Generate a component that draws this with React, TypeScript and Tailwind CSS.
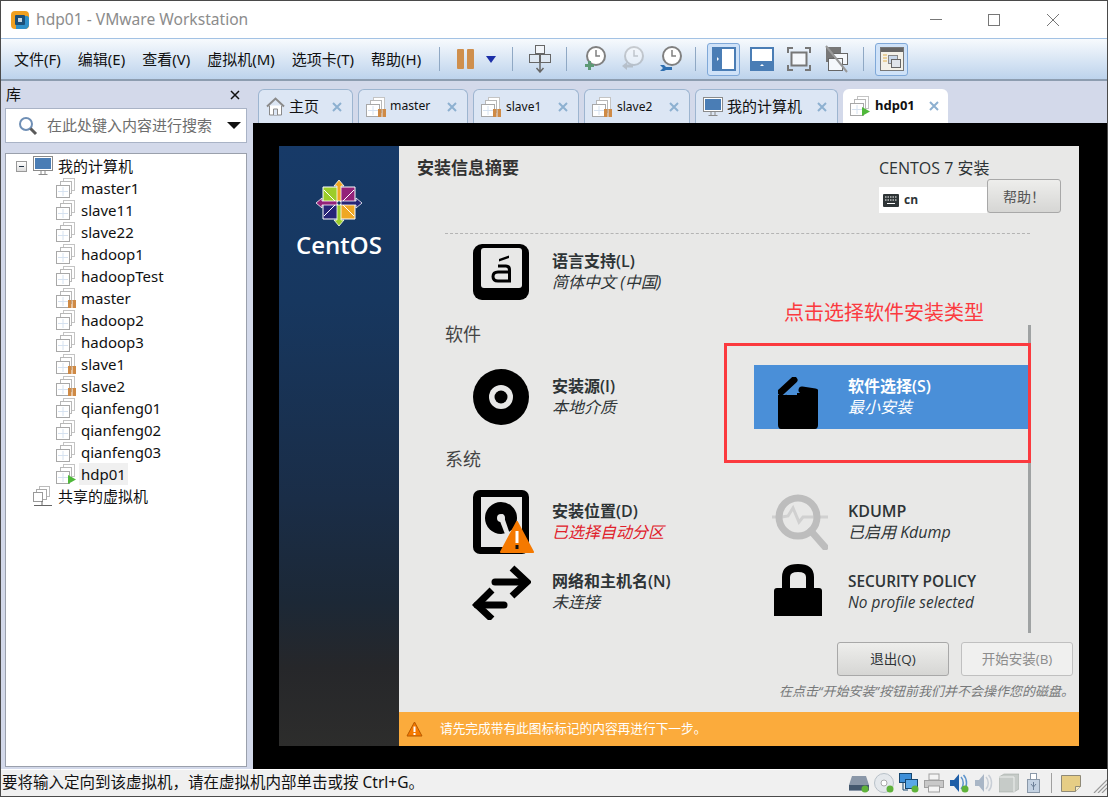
import React from "react";

// window chrome uses a Segoe-like stack, the guest installer an Overpass-like one
const uiFont = "font-['Noto_Sans','Noto_Sans_CJK_SC',sans-serif]";

// VM machine icon with optional state badge
const VmIcon = ({ state }: { state?: "pause" | "play" }) => (
  <svg width="20" height="20" viewBox="0 0 20 20" className="shrink-0">
    <rect x="7.5" y="0.5" width="11" height="12" fill="#fff" stroke="#c4c4c4" />
    <rect x="4.5" y="3.5" width="11" height="12" fill="#fff" stroke="#b8b8b8" />
    <rect x="0.5" y="7.5" width="13" height="12" fill="#fff" stroke="#a8a8a8" />
    <path d="M7 9v9M2 13.5h10" stroke="#d6e2f0" />
    {state === "pause" && (
      <path d="M12 12h3.500v8H12zM16.500 12H20v8h-3.500z" fill="#cf8a45" />
    )}
    {state === "play" && <path d="M12 11l8 4.500-8 4.500z" fill="#4fb83a" />}
  </svg>
);

const Monitor = () => (
  <svg width="20" height="20" viewBox="0 0 20 20" className="shrink-0">
    <rect x="0.500" y="0.500" width="19" height="14" fill="#fff" stroke="#8a8a8a" />
    <rect x="2" y="2" width="16" height="11" fill="#4a7db5" />
    <path d="M8 15v3M12 15v3M5.500 18.500h9" stroke="#8a8a8a" fill="none" />
  </svg>
);

const SharedIcon = () => (
  <svg width="20" height="20" viewBox="0 0 20 20" className="shrink-0">
    <rect x="6.500" y="0.500" width="10" height="10" fill="#fff" stroke="#bbb" />
    <rect x="3.500" y="3.500" width="10" height="10" fill="#fff" stroke="#aaa" />
    <rect x="0.500" y="6.500" width="9" height="9" fill="#fff" stroke="#999" />
    <path d="M9 15v4M1 19.500h18" stroke="#666" />
  </svg>
);

const HomeIcon = () => (
  <svg width="19" height="19" viewBox="0 0 19 19" className="shrink-0">
    <path d="M1 9.500L9.500 1.500 18 9.500" fill="none" stroke="#8a8a8a" strokeWidth="2" />
    <path d="M3.500 8.500v9.500h12V8.500" fill="#fff" stroke="#8a8a8a" />
    <path d="M7.500 18v-6h4v6" fill="#dce6f4" stroke="#8a8a8a" />
  </svg>
);

const Clock = ({
  color,
  children,
}: {
  color: string;
  children: React.ReactNode;
}) => (
  <svg width="24" height="26" viewBox="0 0 24 26" className="shrink-0">
    <circle cx="14" cy="10" r="9" fill="#fff" stroke={color} strokeWidth="2" />
    <path d="M14 4v6h4" fill="none" stroke={color} strokeWidth="1.500" />
    {children}
  </svg>
);

const ToolSep = () => <div className="w-px h-[24px] bg-[#8fa8c4] shrink-0" />;

const ToolToggle = ({ children }: { children: React.ReactNode }) => (
  <div className="w-[33px] h-[33px] rounded-[3px] border border-[#7fa8d8] bg-[#cfe2f8] flex items-center justify-center shrink-0">
    {children}
  </div>
);

const Toolbar = () => (
  <div className="h-[43px] flex items-center border-t border-[#a3c2e4] border-b-2 border-b-[#8d9db0] bg-gradient-to-b from-[#f7fafd] to-[#bdd3ec] pl-[13px]">
    <div className="flex gap-[17px] text-[15px] text-[#111] w-[425px] shrink-0">
      <span>文件(F)</span>
      <span>编辑(E)</span>
      <span>查看(V)</span>
      <span>虚拟机(M)</span>
      <span>选项卡(T)</span>
      <span>帮助(H)</span>
    </div>
    <ToolSep />
    <div className="flex gap-[3px] ml-[17px] shrink-0">
      <div className="w-[7px] h-[20px] bg-[#cf8f4d] rounded-[1px]" />
      <div className="w-[7px] h-[20px] bg-[#cf8f4d] rounded-[1px]" />
    </div>
    <svg width="10" height="7" viewBox="0 0 10 7" className="ml-[12px] shrink-0">
      <path d="M0 0h10L5 7z" fill="#1c2fa8" />
    </svg>
    <div className="ml-[16px]">
      <ToolSep />
    </div>
    <svg width="22" height="28" viewBox="0 0 22 28" className="ml-[16px] shrink-0">
      <rect x="6.500" y="0.500" width="9" height="8" fill="#f2f5f9" stroke="#666" />
      <rect x="0.500" y="9.500" width="10" height="8" fill="#dfe8f2" stroke="#666" />
      <rect x="11.500" y="9.500" width="10" height="8" fill="#dfe8f2" stroke="#666" />
      <path d="M11 18v8M7.500 23l3.500 4 3.500-4" fill="none" stroke="#666" strokeWidth="1.500" />
    </svg>
    <div className="ml-[15px]">
      <ToolSep />
    </div>
    <div className="ml-[15px]">
      <Clock color="#808080">
        <path d="M3 18h3v-3h3v3h3v3H9v3H6v-3H3z" fill="#5d9a76" />
      </Clock>
    </div>
    <div className="ml-[14px] opacity-40">
      <Clock color="#909090">
        <path d="M2 20l5-4v2.500h6v3H7V24z" fill="#909090" />
      </Clock>
    </div>
    <div className="ml-[14px]">
      <Clock color="#808080">
        <path d="M2 19h4l2 2h6v3H8l-2 1H2l3-3z" fill="#2f6fb0" />
      </Clock>
    </div>
    <div className="ml-[13px]">
      <ToolSep />
    </div>
    <div className="ml-[11px]">
      <ToolToggle>
        <svg width="24" height="24" viewBox="0 0 24 24">
          <rect width="24" height="24" fill="#4a7db5" />
          <rect x="10" y="2" width="12" height="20" fill="#fff" />
          <path d="M5 10l2 2-2 2z" fill="#fff" />
        </svg>
      </ToolToggle>
    </div>
    <svg width="24" height="24" viewBox="0 0 24 24" className="ml-[10px] shrink-0">
      <rect width="24" height="24" fill="#4a7db5" />
      <rect x="2" y="2" width="20" height="12" fill="#fff" />
      <path d="M10 19l2-2 2 2z" fill="#fff" />
    </svg>
    <svg width="24" height="24" viewBox="0 0 24 24" className="ml-[13px] shrink-0">
      <path d="M1 6V1h5M18 1h5v5M23 18v5h-5M6 23H1v-5" fill="none" stroke="#777" strokeWidth="2" />
      <rect x="4.500" y="5.500" width="15" height="13" fill="#f4f7fb" stroke="#777" strokeWidth="2" />
    </svg>
    <svg width="24" height="28" viewBox="0 0 24 28" className="ml-[14px] shrink-0">
      <rect x="1" y="2" width="15" height="15" fill="#777" />
      <rect x="8.500" y="8.500" width="14" height="11" fill="#f4f7fb" stroke="#666" />
      <rect x="3.500" y="13.500" width="14" height="12" fill="#f4f7fb" stroke="#666" />
      <path d="M1 1l21 26" stroke="#999" strokeWidth="2" />
    </svg>
    <div className="ml-[14px]">
      <ToolSep />
    </div>
    <div className="ml-[11px]">
      <ToolToggle>
        <svg width="24" height="24" viewBox="0 0 24 24">
          <rect x="0.500" y="0.500" width="23" height="23" fill="#f3f1e9" stroke="#777" />
          <rect x="1" y="1" width="22" height="4" fill="#666" />
          <path d="M3 8h4M3 11h4M3 14h4" stroke="#e0b050" />
          <rect x="8.500" y="8.500" width="9" height="8" fill="#c9d8ea" stroke="#888" />
          <rect x="11.500" y="12.500" width="9" height="8" fill="#dfe4ea" stroke="#666" />
        </svg>
      </ToolToggle>
    </div>
  </div>
);

const tabs = [
  { name: "主页", w: "w-[95px]", icon: <HomeIcon />, cls: "text-[15px] ml-[4px]" },
  { name: "master", w: "w-[110px]", icon: <VmIcon state="pause" />, cls: "text-[12.200px] ml-[4px]" },
  { name: "slave1", w: "w-[106px]", icon: <VmIcon state="pause" />, cls: "text-[12px] ml-[5px]" },
  { name: "slave2", w: "w-[106px]", icon: <VmIcon state="pause" />, cls: "text-[12px] ml-[5px]" },
  { name: "我的计算机", w: "w-[143px]", icon: <Monitor />, cls: "text-[15px] ml-[4px]" },
];

const CloseX = ({ color = "#8db0d0" }: { color?: string }) => (
  <svg width="10" height="10" viewBox="0 0 10 10" className="shrink-0">
    <path d="M1 1l8 8M9 1l-8 8" stroke={color} strokeWidth="2" />
  </svg>
);

const TabBar = () => (
  <div className="h-[42px] pt-[8px] pl-[5px] flex gap-[5px] bg-[#d3d9ea] shrink-0">
    {tabs.map((t) => (
      <div
        key={t.name}
        className={`${t.w} h-[34px] pl-[7px] pr-[10px] flex items-center bg-[#dce6f4] border border-b-0 border-[#9db5d0] rounded-t-[6px] text-[#111]`}
      >
        {t.icon}
        <span className={t.cls}>{t.name}</span>
        <span className="ml-auto">
          <CloseX />
        </span>
      </div>
    ))}
    <div className="w-[105px] h-[34px] pl-[7px] pr-[9px] flex items-center bg-white rounded-t-[6px] text-[#111]">
      <VmIcon state="play" />
      <span className="text-[13px] font-bold ml-[5px]">hdp01</span>
      <span className="ml-auto">
        <CloseX />
      </span>
    </div>
  </div>
);

const vms: { name: string; state?: "pause" | "play" }[] = [
  { name: "master1" },
  { name: "slave11" },
  { name: "slave22" },
  { name: "hadoop1" },
  { name: "hadoopTest" },
  { name: "master", state: "pause" },
  { name: "hadoop2" },
  { name: "hadoop3" },
  { name: "slave1", state: "pause" },
  { name: "slave2", state: "pause" },
  { name: "qianfeng01" },
  { name: "qianfeng02" },
  { name: "qianfeng03" },
  { name: "hdp01", state: "play" },
];

const Library = () => (
  <div className="w-[252px] shrink-0 bg-[#d3d9ea] pl-[4px] flex flex-col">
    <div className="h-[27px] w-[242px] flex items-center justify-between pl-[1px] pr-[7px] text-[15px] text-[#111]">
      <span>库</span>
      <svg width="10" height="10" viewBox="0 0 10 10">
        <path d="M1 1l8 8M9 1l-8 8" stroke="#111" strokeWidth="1.500" />
      </svg>
    </div>
    <div className="h-[35px] w-[242px] bg-white border border-[#a9b3c6] flex items-center pl-[12px] pr-[4px]">
      <svg width="20" height="20" viewBox="0 0 20 20" className="shrink-0">
        <circle cx="8" cy="8" r="6" fill="#fff" stroke="#6f8fb5" strokeWidth="2" />
        <path d="M12.500 12.500L18 18" stroke="#5a5a5a" strokeWidth="3" />
      </svg>
      <span className="ml-[9px] text-[15px] text-[#6d6d6d]">在此处键入内容进行搜索</span>
      <svg width="14" height="7" viewBox="0 0 14 7" className="ml-auto mr-[1px]">
        <path d="M0 0h14L7 7z" fill="#111" />
      </svg>
    </div>
    <div className="mt-[10px] h-[614px] w-[242px] bg-white border border-[#9aa0ac] pt-[1px] text-[15px] text-[#111]">
      <div className="h-[22px] flex items-center pl-[10px]">
        <div className="w-[11px] h-[11px] border border-[#999] bg-gradient-to-b from-white to-[#ddd] flex items-center justify-center">
          <div className="w-[5px] h-px bg-[#234]" />
        </div>
        <div className="ml-[6px]">
          <Monitor />
        </div>
        <span className="ml-[5px]">我的计算机</span>
      </div>
      {vms.map((vm) => (
        <div key={vm.name} className="h-[22px] flex items-center pl-[50px]">
          <VmIcon state={vm.state} />
          <span
            className={`ml-[3px] px-[2px] leading-[22px] ${
              vm.name === "hdp01" ? "bg-[#f0f0f0]" : ""
            }`}
          >
            {vm.name}
          </span>
        </div>
      ))}
      <div className="h-[22px] flex items-center pl-[27px]">
        <SharedIcon />
        <span className="ml-[5px]">共享的虚拟机</span>
      </div>
    </div>
  </div>
);

// CentOS pinwheel
const CentosLogo = () => (
  <svg width="46" height="46" viewBox="0 0 46 46">
    <path d="M7 7h14.500v14.500H7z" fill="#9ccd2a" stroke="#fff" />
    <path d="M24.500 7H39v14.500H24.500z" fill="#932279" stroke="#fff" />
    <path d="M7 24.500h14.500V39H7z" fill="#262577" stroke="#fff" />
    <path d="M24.500 24.500H39V39H24.500z" fill="#efa724" stroke="#fff" />
    <path d="M23 0l5 6h-3v15h-4V6h-3z" fill="#efa724" stroke="#fff" strokeWidth="0.800" />
    <path d="M46 23l-6 5v-3H25v-4h15v-3z" fill="#262577" stroke="#fff" strokeWidth="0.800" />
    <path d="M23 46l-5-6h3V25h4v15h3z" fill="#9ccd2a" stroke="#fff" strokeWidth="0.800" />
    <path d="M0 23l6-5v3h15v4H6v3z" fill="#932279" stroke="#fff" strokeWidth="0.800" />
    <path d="M8 10l11 11M38 10L27 21M8 36l11-11M38 36L27 25" stroke="#fff" strokeWidth="1" />
  </svg>
);

const LangIcon = () => (
  <svg width="56" height="56" viewBox="0 0 56 56">
    <rect width="56" height="56" rx="9" fill="#000" />
    <rect x="8" y="4" width="41" height="40" rx="3" fill="#e8e8e7" />
    <path d="M26 15l10-3.500v2.500l-10 3.500z" fill="#000" />
    <path
      d="M25 22h8c2.500 0 3.500 1.500 3.500 4v11H25c-3 0-5-1.500-5-4.500s2-4.500 5-4.500h11"
      fill="none"
      stroke="#000"
      strokeWidth="3"
    />
  </svg>
);

const DiscIcon = () => (
  <svg width="56" height="56" viewBox="0 0 56 56">
    <circle cx="28" cy="28" r="28" fill="#000" />
    <circle cx="28" cy="28" r="12" fill="#e8e8e7" />
    <circle cx="28" cy="28" r="6.500" fill="#000" />
  </svg>
);

const DiskIcon = () => (
  <svg width="60" height="64" viewBox="0 0 60 64" className="overflow-visible">
    <rect width="56" height="64" rx="7" fill="#000" />
    <rect x="8" y="7" width="41" height="50" fill="#e8e8e7" />
    <circle cx="28" cy="28" r="16" fill="#000" />
    <path d="M25 26l5-2 9 26-4 2z" fill="#e8e8e7" />
    <circle cx="28" cy="28" r="4" fill="#e8e8e7" />
    <path d="M44 32l16 30H28z" fill="#f57900" stroke="#f57900" strokeWidth="2" strokeLinejoin="round" />
    <path d="M44 41v12" stroke="#fff" strokeWidth="3" />
    <path d="M42.500 55h3v4h-3z" fill="#111" />
  </svg>
);

const NetIcon = () => (
  <svg width="60" height="56" viewBox="0 0 60 56" fill="none" stroke="#000" strokeWidth="7" strokeLinecap="round">
    <path d="M24 18h29" />
    <path d="M41 4l15 14-15 14" strokeLinecap="butt" />
    <path d="M33 41H6" />
    <path d="M21 26L6 41l15 14" strokeLinecap="butt" />
  </svg>
);

const PackageIcon = () => (
  <svg width="40" height="52" viewBox="0 0 40 52" className="mt-[12px]">
    <path d="M0 18h7l9-2h24v32c0 2-1 4-3 4H3c-2 0-3-2-3-4z" fill="#000" />
    <path d="M3 15L16 3" stroke="#000" strokeWidth="7" strokeLinecap="round" />
    <path d="M24 13l13 2" stroke="#000" strokeWidth="7" strokeLinecap="round" />
    <path d="M8 18l11-11v11z" fill="#4a8fd8" />
  </svg>
);

const KdumpIcon = () => (
  <svg width="56" height="56" viewBox="0 0 56 56" fill="none" stroke="#bdbdbd">
    <path d="M0 23h10l6-1 5-8 6 14 4-5h25" strokeWidth="3" stroke="#d0d0d0" />
    <circle cx="26" cy="23" r="19" strokeWidth="7" />
    <path d="M39 37l14 16" strokeWidth="7" strokeLinecap="round" />
  </svg>
);

const LockIcon = () => (
  <svg width="48" height="52" viewBox="0 0 48 52" className="mb-[4px]">
    <path d="M12 26V13c0-6 4-9 12-9s12 3 12 9v13" fill="none" stroke="#000" strokeWidth="8" />
    <path d="M3 24h42c2 0 3 1 3 3v25H0V27c0-2 1-3 3-3z" fill="#000" />
  </svg>
);

const Spoke = ({
  icon,
  title,
  sub,
  tone = "text-[#2e3436]",
  subTone = "text-[#2e3436]",
  textLeft,
  size = "text-[16px]",
}: {
  icon: React.ReactNode;
  title: string;
  sub: string;
  tone?: string;
  subTone?: string;
  textLeft: string;
  size?: string;
}) => (
  <div className={`h-full flex items-center ${tone}`}>
    <div className={`${textLeft} flex items-center shrink-0`}>{icon}</div>
    <div className={`leading-[21px] whitespace-nowrap ${size}`}>
      <div className="font-semibold">{title}</div>
      <div className={`italic ${subTone}`}>{sub}</div>
    </div>
  </div>
);

const Installer = () => (
  <div className="w-[800px] h-[600px] flex text-[#2e3436] font-['Open_Sans','Noto_Sans_CJK_SC',sans-serif]">
    <div className="w-[120px] shrink-0 bg-[linear-gradient(to_bottom,#173a68_0%,#17375f_26%,#1a2d47_59%,#1c2836_76%,#26272a_87%,#2d2d2c_100%)] flex flex-col items-center pt-[34px]">
      <CentosLogo />
      <div className="mt-[4px] text-[24px] leading-[30px] font-semibold text-white">CentOS</div>
    </div>
    <div className="relative flex-1 bg-[#e8e8e7] flex flex-col">
      <div className="h-[87px] flex justify-between pl-[18px] pr-[18px] pt-[11px] shrink-0">
        <div className="text-[17px] font-semibold leading-[21px] text-[#333]">安装信息摘要</div>
        <div className="w-[182px]">
          <div className="text-[16px] leading-[22px] whitespace-nowrap">CENTOS 7 安装</div>
          <div className="h-[34px] flex items-end">
            <div className="w-[108px] h-[26px] bg-white flex items-center pl-[4px] gap-[5px] text-[12px] font-bold">
              <svg width="16" height="13" viewBox="0 0 16 13">
                <rect width="16" height="13" rx="1" fill="#2e3436" />
                <path d="M2 3h12M2 6h12" stroke="#fff" strokeDasharray="1.500 1" />
                <path d="M4 9.500h8" stroke="#fff" />
              </svg>
              cn
            </div>
            <div className="w-[74px] h-[34px] border border-[#a8a8a8] rounded-[3px] bg-gradient-to-b from-[#eeeeec] to-[#d6d6d4] flex items-center justify-center text-[14px] text-[#555]">
              帮助！
            </div>
          </div>
        </div>
      </div>
      <div className="ml-[46px] w-[585px] border-t border-dashed border-[#b4b4b4] shrink-0" />
      <div className="mt-[6px] grid grid-cols-[355px_277px] grid-rows-[64px_61px_64px_61px_64px]">
        <div className="pl-[74px]">
          <Spoke textLeft="w-[79px]" icon={<LangIcon />} title="语言支持(L)" sub="简体中文 (中国)" />
        </div>
        <div />
        <div className="col-span-2 flex items-center pl-[46px] text-[18px] text-[#444]">软件</div>
        <div className="pl-[74px]">
          <Spoke textLeft="w-[79px]" icon={<DiscIcon />} title="安装源(I)" sub="本地介质" />
        </div>
        <div className="bg-[#4a8fd8] pl-[24px]">
          <Spoke
            textLeft="w-[70px]"
            tone="text-white"
            subTone="text-white"
            icon={<PackageIcon />}
            title="软件选择(S)"
            sub="最小安装"
          />
        </div>
        <div className="col-span-2 flex items-center pl-[46px] text-[18px] text-[#444]">系统</div>
        <div className="pl-[74px]">
          <Spoke
            textLeft="w-[79px]"
            icon={<DiskIcon />}
            title="安装位置(D)"
            sub="已选择自动分区"
            subTone="text-[#e0202a]"
          />
        </div>
        <div className="pl-[18px]">
          <Spoke textLeft="w-[76px]" icon={<KdumpIcon />} title="KDUMP" sub="已启用 Kdump" />
        </div>
      </div>
      <div className="mt-[6px] grid grid-cols-[355px_277px] h-[64px]">
        <div className="pl-[72px]">
          <Spoke textLeft="w-[81px]" icon={<NetIcon />} title="网络和主机名(N)" sub="未连接" />
        </div>
        <div className="pl-[20px]">
          <Spoke
            textLeft="w-[74px]"
            size="text-[15.400px]"
            icon={<LockIcon />}
            title="SECURITY POLICY"
            sub="No profile selected"
          />
        </div>
      </div>
      <div className="mt-[18px] flex justify-end gap-[12px] pr-[6px] text-[13.500px]">
        <div className="w-[112px] h-[34px] border border-[#a8a8a8] rounded-[3px] bg-gradient-to-b from-[#eeeeec] to-[#d6d6d4] flex items-center justify-center text-[#2e3436]">
          退出(Q)
        </div>
        <div className="w-[112px] h-[34px] border border-[#c0c0c0] rounded-[3px] bg-[#f0f0ef] flex items-center justify-center text-[#8c8c8c]">
          开始安装(B)
        </div>
      </div>
      <div className="mt-[6px] pr-[5px] text-right text-[13px] leading-[18px] italic text-[#77797a]">
        在点击“开始安装”按钮前我们并不会操作您的磁盘。
      </div>
      <div className="mt-auto h-[34px] bg-[#fbab3c] flex items-center pl-[7px] text-[12.700px] text-white">
        <svg width="17" height="16" viewBox="0 0 17 16">
          <path d="M8.500 1L16 15H1z" fill="#f57900" stroke="#b85a00" strokeLinejoin="round" />
          <path d="M8.500 5.500v5.500" stroke="#fff" strokeWidth="2" />
          <path d="M7.500 12h2v2h-2z" fill="#fff" />
        </svg>
        <span className="ml-[17px]">请先完成带有此图标标记的内容再进行下一步。</span>
      </div>

      {/* scrollbar and the red annotation sit on top of the spokes */}
      <div className="absolute left-[629px] top-[179px] w-[3px] h-[308px] bg-[#9fa2a3]" />
      <div className="absolute left-[325px] top-[197px] w-[307px] h-[120px] border-[3px] border-[#fb3a3f]" />
      <div className="absolute left-[385px] top-[153px] text-[20px] leading-[26px] text-[#fb3a3f] font-['Noto_Sans_CJK_SC',sans-serif]">
        点击选择软件安装类型
      </div>
    </div>
  </div>
);

const StatusIcons = () => (
  <div className="ml-auto flex items-center shrink-0">
    <svg width="20" height="20" viewBox="0 0 20 20">
      <path d="M3 3h14l3 9v6H0v-6z" fill="#8a97a8" />
      <rect y="12" width="20" height="5" fill="#44586e" />
      <circle cx="16" cy="16" r="3.500" fill="#5fb23a" />
    </svg>
    <svg width="20" height="20" viewBox="0 0 20 20" className="ml-[5px]">
      <circle cx="10" cy="10" r="9.500" fill="#e4e8ec" stroke="#b8c0c8" />
      <circle cx="10" cy="10" r="3" fill="#fff" stroke="#aaa" />
      <circle cx="16" cy="16" r="3.500" fill="#5fb23a" />
    </svg>
    <svg width="20" height="20" viewBox="0 0 20 20" className="ml-[5px]">
      <rect x="0.500" y="0.500" width="12" height="9" fill="#3f8fd8" stroke="#16466f" />
      <rect x="6.500" y="6.500" width="12" height="9" fill="#5aa8e8" stroke="#16466f" />
      <path d="M4 10v7h5" stroke="#16466f" fill="none" />
      <circle cx="16" cy="16" r="3.500" fill="#5fb23a" />
    </svg>
    <svg width="20" height="20" viewBox="0 0 20 20" className="ml-[5px]">
      <rect x="5" y="1" width="10" height="6" fill="#f4f4f4" stroke="#a0a0a0" />
      <rect x="0.500" y="7.500" width="19" height="7" fill="#c8c8c8" stroke="#a0a0a0" />
      <rect x="4.500" y="13" width="11" height="6" fill="#f4f4f4" stroke="#a0a0a0" />
    </svg>
    <svg width="20" height="20" viewBox="0 0 20 20" className="ml-[5px]">
      <path d="M1 7h4l5-6v18l-5-6H1z" fill="#1f5fa8" />
      <path d="M12 4c3 3 3 9 0 12M14.500 2c4 4 4 12 0 16" fill="none" stroke="#5c94cc" strokeWidth="1.500" />
      <circle cx="16" cy="16" r="3.500" fill="#5fb23a" />
    </svg>
    <svg width="20" height="20" viewBox="0 0 20 20" className="ml-[5px]">
      <path d="M1 7h4l5-6v18l-5-6H1z" fill="#a9b6c6" />
      <path d="M12 4c3 3 3 9 0 12M14.500 2c4 4 4 12 0 16" fill="none" stroke="#c8ced6" strokeWidth="1.500" />
    </svg>
    <svg width="20" height="20" viewBox="0 0 20 20" className="ml-[5px]">
      <path d="M0 4l5-3h15v15l-5 3H0z" fill="#c6cbc8" stroke="#9aa09c" strokeWidth="0.500" />
      <path d="M0 4h15v15" fill="none" stroke="#eef0ee" />
    </svg>
    <svg width="13" height="20" viewBox="0 0 13 20" className="ml-[8px]">
      <rect x="3.500" y="0.500" width="6" height="6" fill="#fff" stroke="#8a98a8" />
      <rect x="0.500" y="6.500" width="12" height="13" fill="#c4d2e2" stroke="#8a98a8" />
      <path d="M6.500 9v8M4 11l2.500 3L9 11" fill="none" stroke="#6d8098" />
    </svg>
    <div className="w-px h-[20px] bg-[#a0a0a0] ml-[11px]" />
    <svg width="20" height="17" viewBox="0 0 20 17" className="ml-[9px]">
      <path d="M0.500 0.500h19v11l-5 5h-14z" fill="#e6cd85" stroke="#8f8a78" />
      <path d="M14.500 16.500v-5h5" fill="#f6ecc8" stroke="#8f8a78" />
    </svg>
    <svg width="14" height="14" viewBox="0 0 14 14" className="ml-[12px] self-end">
      <path d="M14 1L1 14M14 5L5 14M14 9l-5 5" stroke="#9a9a9a" strokeWidth="1.200" />
    </svg>
  </div>
);

const App = () => (
  <div
    className={`${uiFont} w-[1108px] h-[797px] overflow-hidden flex flex-col border-x border-t border-b border-[#4a4a4a] bg-white`}
  >
    <div className="h-[37px] flex items-center bg-white shrink-0 pl-[10px]">
      <svg width="18" height="18" viewBox="0 0 18 18" className="shrink-0">
        <rect width="18" height="18" rx="4" fill="#f0a020" />
        <path d="M5 5h11c1 0 2 1 2 2v7c0 2-2 4-4 4H5z" fill="#2f90c8" />
        <rect x="4" y="4" width="10" height="10" rx="1" fill="#1a4f78" />
        <rect x="7" y="7" width="4" height="4" fill="#c8d8e0" />
      </svg>
      <span className="ml-[7px] text-[15.600px] text-[#8c8c8c]">hdp01 - VMware Workstation</span>
      <svg width="154" height="14" viewBox="0 0 154 14" className="ml-auto mr-[23px] shrink-0" fill="none" stroke="#777">
        <path d="M0 6.500h12" />
        <rect x="58.500" y="1.500" width="11" height="11" />
        <path d="M117 1l12 12M129 1l-12 12" />
      </svg>
    </div>
    <Toolbar />
    <div className="flex-1 flex min-h-0">
      <Library />
      <div className="flex-1 flex flex-col min-w-0">
        <TabBar />
        <div className="flex-1 bg-black pl-[26px] pt-[23px]">
          <Installer />
        </div>
      </div>
    </div>
    <div className="h-[27px] shrink-0 flex items-center border-t border-white bg-[#f0f0f0] pl-[1px] text-[15.500px] text-[#111] whitespace-nowrap">
      <span>要将输入定向到该虚拟机，请在虚拟机内部单击或按 Ctrl+G。</span>
      <StatusIcons />
    </div>
  </div>
);

export default App;
